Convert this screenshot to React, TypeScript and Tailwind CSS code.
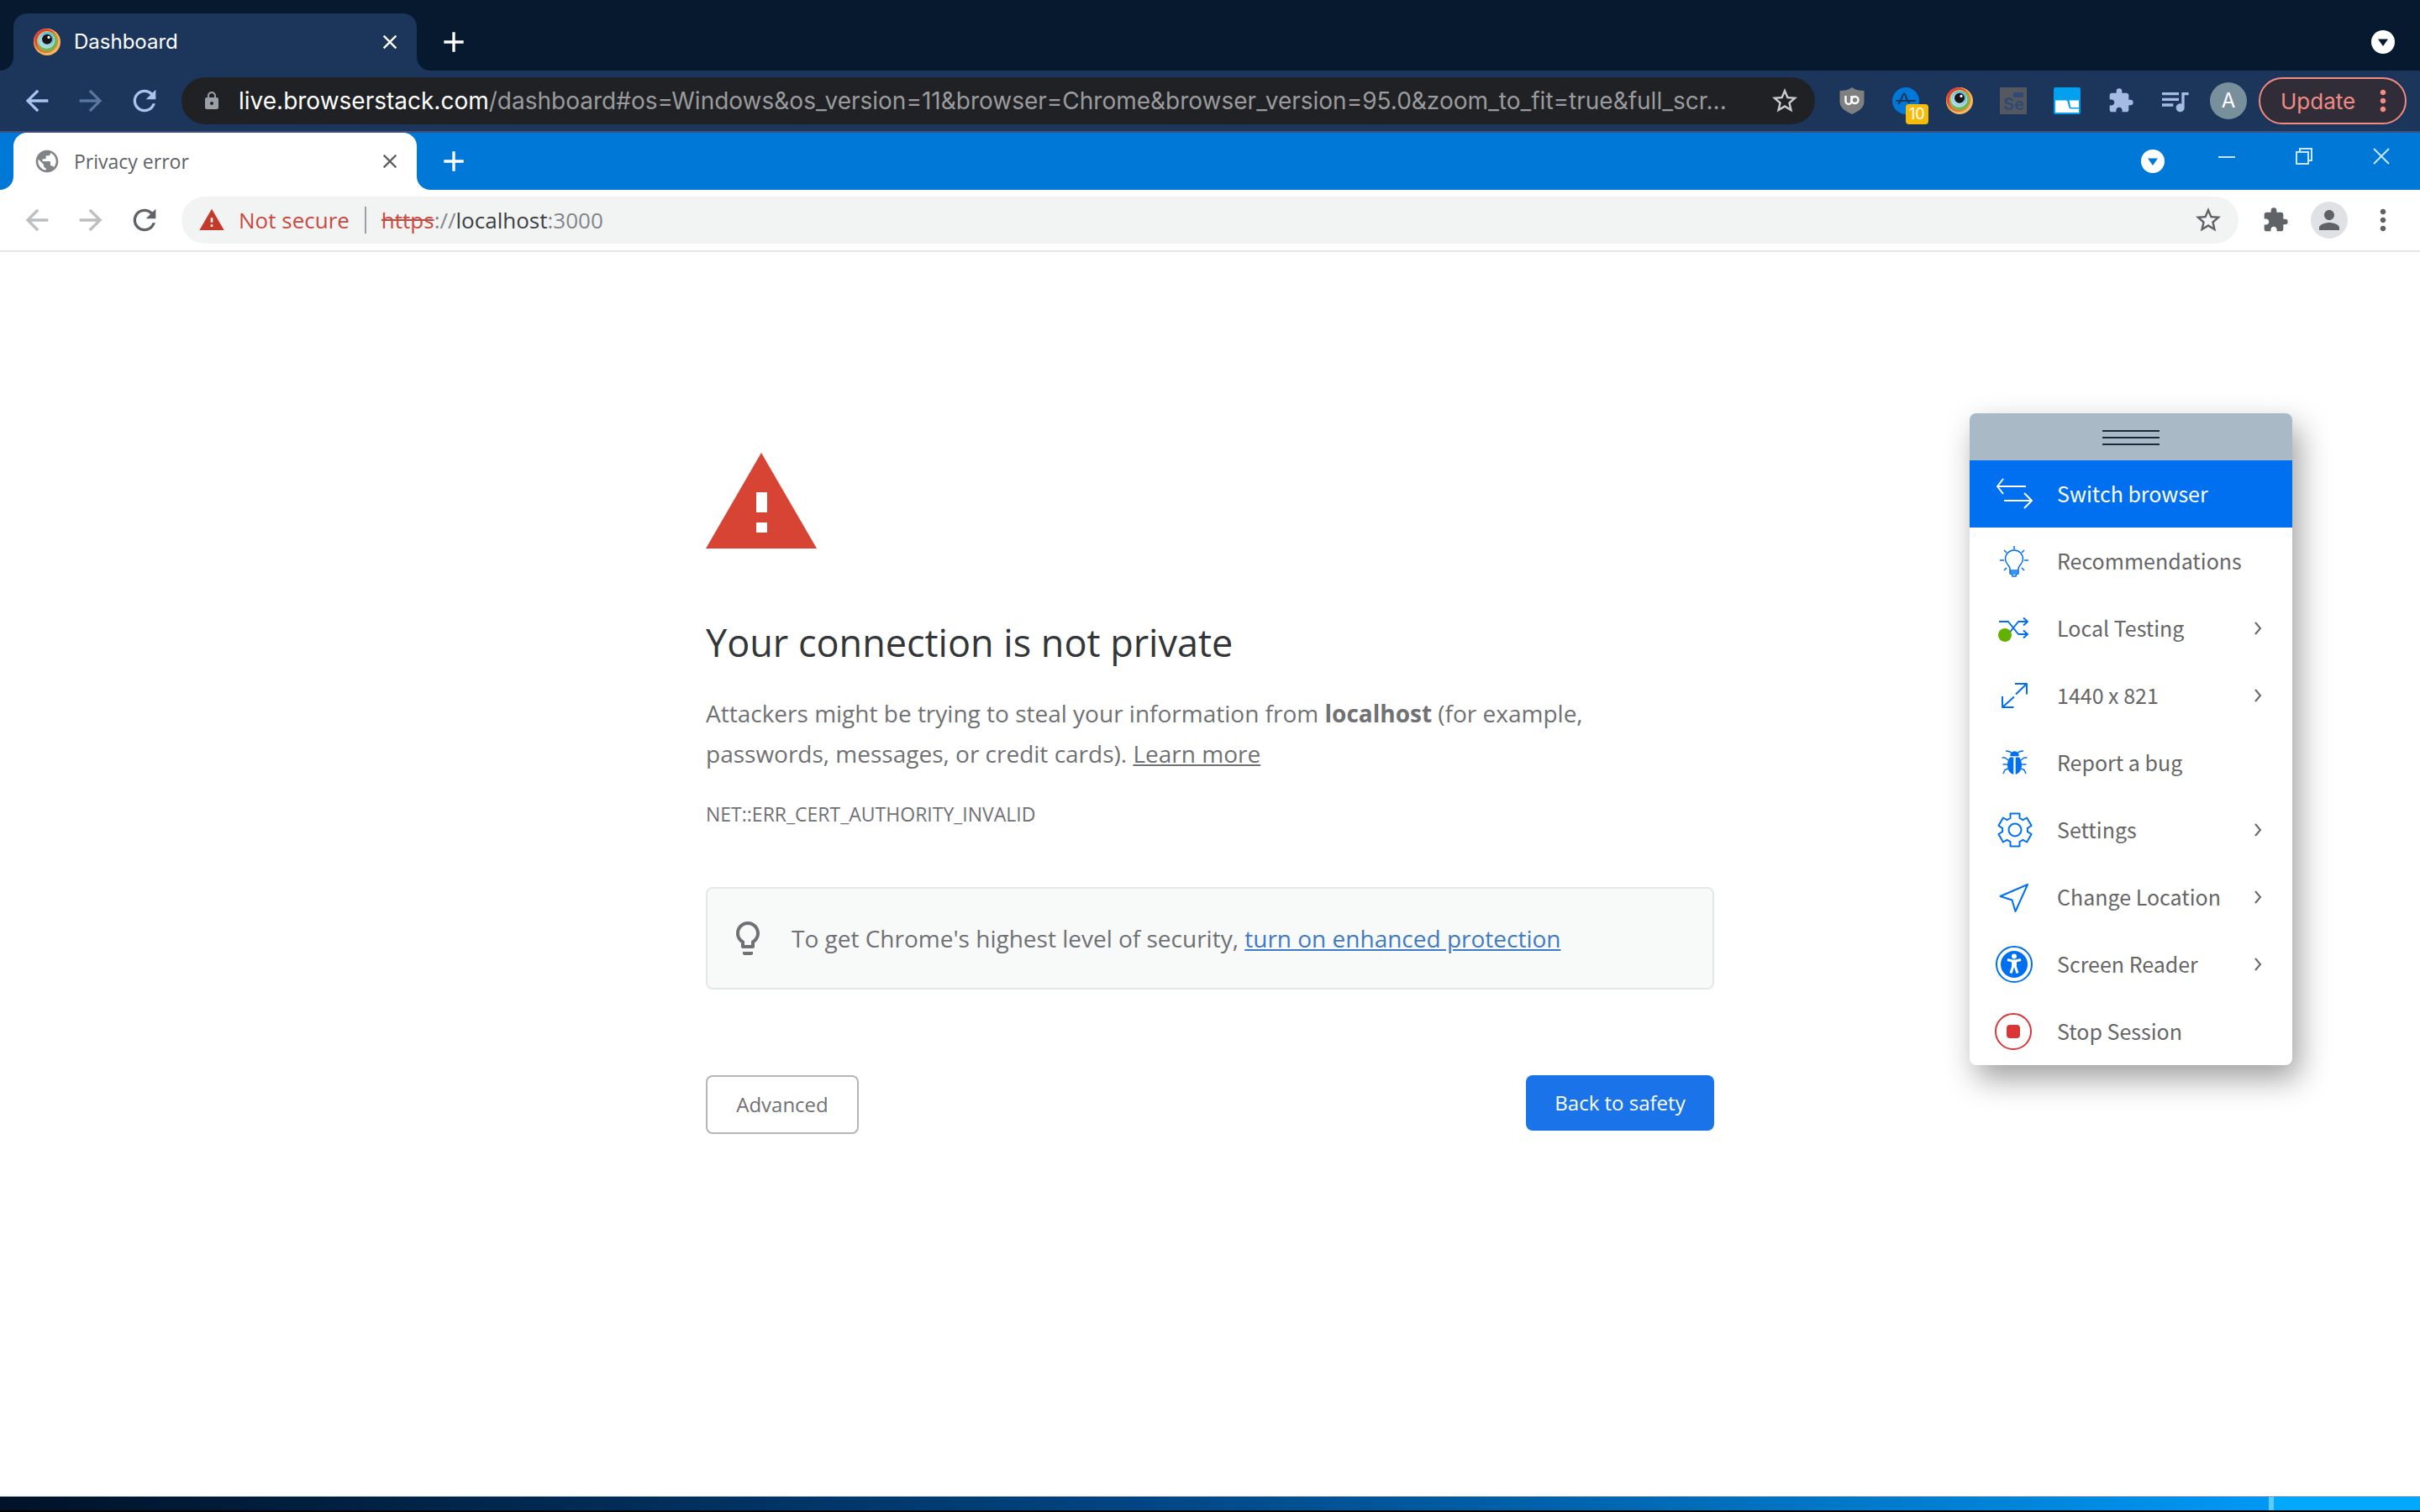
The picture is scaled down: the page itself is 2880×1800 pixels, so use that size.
import type { ReactNode } from "react";
import {
  MdAdd,
  MdArrowBack,
  MdArrowForward,
  MdClose,
  MdExtension,
  MdLightbulbOutline,
  MdLock,
  MdMoreVert,
  MdPerson,
  MdPublic,
  MdQueueMusic,
  MdRefresh,
  MdStarBorder,
  MdWarning,
} from "react-icons/md";

interface IconButtonProps {
  label: string;
  className?: string;
  children: ReactNode;
}

function IconButton({ label, className = "", children }: IconButtonProps) {
  return (
    <button
      type="button"
      aria-label={label}
      className={`flex size-10 shrink-0 items-center justify-center ${className}`}
    >
      {children}
    </button>
  );
}

function BrowserStackLogo() {
  return (
    <svg viewBox="0 0 32 32" className="size-8 shrink-0" aria-hidden="true">
      <circle cx="16" cy="16" r="16" fill="#f4b960" />
      <circle cx="14.6" cy="14.6" r="14.4" fill="#e66f32" />
      <circle cx="14" cy="13.2" r="12.6" fill="#e43c41" />
      <circle cx="16" cy="15" r="12" fill="#bdd041" />
      <circle cx="16.4" cy="15.4" r="11.4" fill="#6db54c" />
      <circle cx="15.4" cy="14" r="10" fill="#aedadb" />
      <circle cx="15.6" cy="13" r="8.4" fill="#56b8de" />
      <circle cx="14.8" cy="14" r="7.6" fill="#a5d9ea" />
      <circle cx="16" cy="12.8" r="6" fill="#191315" />
      <circle cx="18" cy="10.4" r="1.6" fill="#fff" />
    </svg>
  );
}

// The two rounded corners that join a tab to its toolbar
function TabFeet({ className }: { className: string }) {
  return (
    <>
      <svg viewBox="0 0 16 16" className={`absolute right-full bottom-0 size-4 ${className}`} aria-hidden="true">
        <path d="M16 0V16H0A16 16 0 0 0 16 0Z" fill="currentColor" />
      </svg>
      <svg viewBox="0 0 16 16" className={`absolute bottom-0 left-full size-4 ${className}`} aria-hidden="true">
        <path d="M0 0V16H16A16 16 0 0 1 0 0Z" fill="currentColor" />
      </svg>
    </>
  );
}

function TabSearch({ className }: { className: string }) {
  return (
    <button type="button" aria-label="Search tabs" className="shrink-0">
      <svg viewBox="0 0 28 28" className={`size-7 ${className}`}>
        <circle cx="14" cy="14" r="14" fill="#fff" />
        <path d="M8 10.500H20L14 19Z" fill="currentColor" />
      </svg>
    </button>
  );
}

function HostBrowser() {
  return (
    <header className="font-[Inter,sans-serif]">
      <div className="flex h-21 items-end bg-[#06192f] pr-[30px] pl-4">
        <div className="relative flex h-[68px] w-[480px] items-center rounded-t-2xl bg-[#1c355b] pr-4 pl-6 text-white">
          <TabFeet className="text-[#1c355b]" />
          <BrowserStackLogo />
          <span className="ml-4 flex-1 text-2xl">Dashboard</span>
          <button type="button" aria-label="Close tab" className="flex size-8 items-center justify-center">
            <MdClose className="size-7" />
          </button>
        </div>
        <div className="flex h-[68px] flex-1 items-center justify-between pl-6 text-white">
          <IconButton label="New tab">
            <MdAdd className="size-11" />
          </IconButton>
          <TabSearch className="text-[#06192f]" />
        </div>
      </div>

      <div className="flex h-[74px] items-center gap-6 border-b-2 border-[#40507c] bg-[#1c355b] px-4 pl-6">
        <IconButton label="Back" className="text-[#a9c3ef]">
          <MdArrowBack className="size-10" />
        </IconButton>
        <IconButton label="Forward" className="text-[#5a759f]">
          <MdArrowForward className="size-10" />
        </IconButton>
        <IconButton label="Reload" className="text-[#a9c3ef]">
          <MdRefresh className="size-10" />
        </IconButton>
        <div className="flex h-14 min-w-0 flex-1 items-center rounded-full bg-[#202124] pr-4 pl-5 text-[28px]">
          <MdLock className="size-8 shrink-0 p-1 text-[#9aa0a6]" />
          <label htmlFor="host-url" className="ml-4 text-white">
            live.browserstack.com
          </label>
          <input
            id="host-url"
            className="min-w-0 flex-1 bg-transparent text-[#9a9b9d] outline-none"
            defaultValue="/dashboard#os=Windows&os_version=11&browser=Chrome&browser_version=95.0&zoom_to_fit=true&full_scr..."
          />
          <IconButton label="Bookmark this page" className="text-[#c8cace]">
            <MdStarBorder className="size-9" />
          </IconButton>
        </div>
        <IconButton label="uBlock Origin">
          <svg viewBox="0 0 32 32" className="size-8">
            <path d="M16 0c4 3 9 4 14.500 4v13c0 8-8 12-14.500 15C9.500 29 1.500 25 1.500 17V4C7 4 12 3 16 0Z" fill="#808080" />
            <g fill="none" stroke="#fff" strokeWidth="2.400">
              <path d="M8.500 10v6.500a3.500 3.500 0 0 0 7 0V10" />
              <circle cx="19.500" cy="15" r="4" />
            </g>
          </svg>
        </IconButton>
        <IconButton label="Accessibility scanner" className="relative">
          <svg viewBox="0 0 32 32" className="size-8">
            <circle cx="16" cy="16" r="16" fill="#0078d7" />
            <path d="M4 16H28M7 20c3-2 5-12 7-12.500c3 0 2 11 7 10.500" fill="none" stroke="#1c355b" strokeWidth="2.200" />
          </svg>
          <span className="absolute top-6 left-5 rounded bg-[#f5bc0c] px-1 text-lg leading-6 text-white">
            10
          </span>
        </IconButton>
        <IconButton label="BrowserStack">
          <BrowserStackLogo />
        </IconButton>
        <IconButton label="Selenium IDE">
          <span className="relative flex size-8 items-end bg-[#55595f] pl-1 text-xl leading-6 font-bold text-[#2f4a73]">
            Se
            <span className="absolute top-1.5 right-1 h-1.5 w-3 bg-[#2f4a73]" />
          </span>
        </IconButton>
        <IconButton label="Window resizer">
          <svg viewBox="0 0 32 32" className="size-8">
            <rect width="32" height="32" rx="2" fill="#03a0f0" />
            <path d="M2 15.500H15C18 16 17 25.500 20 25.500H30V30H2Z" fill="#fff" />
            <path d="M18 15.500H30V24H21C19 23 20 17 18 15.500Z" fill="#fff" />
          </svg>
        </IconButton>
        <IconButton label="Extensions" className="text-[#a6bbe3]">
          <MdExtension className="size-8" />
        </IconButton>
        <IconButton label="Media controls" className="text-[#a6bbe3]">
          <MdQueueMusic className="size-10" />
        </IconButton>
        <IconButton label="Profile">
          <span className="flex size-11 shrink-0 items-center justify-center rounded-full bg-[#78909c] text-2xl text-white">
            A
          </span>
        </IconButton>
        <button
          type="button"
          className="-ml-2 flex h-14 w-44 shrink-0 items-center justify-between rounded-full border-2 border-[#f28b82] bg-[#302c38] pr-1.5 pl-6 text-[26px] text-[#f28b82]"
        >
          Update
          <MdMoreVert className="size-10" />
        </button>
      </div>
    </header>
  );
}

function RemoteBrowser() {
  return (
    <header className="font-['Open_Sans',sans-serif]">
      <div className="flex h-[68px] bg-[#0078d7] pl-4">
        <div className="relative flex h-full w-[480px] items-center rounded-t-2xl bg-white pr-4 pl-6 text-[#5f6368]">
          <TabFeet className="text-white" />
          <MdPublic className="size-8 text-[#808488]" />
          <span className="ml-4 flex-1 text-[23px]">Privacy error</span>
          <button type="button" aria-label="Close tab" className="flex size-8 items-center justify-center">
            <MdClose className="size-7" />
          </button>
        </div>
        <div className="flex flex-1 items-center justify-between pl-6 text-white">
          <IconButton label="New tab">
            <MdAdd className="size-11" />
          </IconButton>
          <TabSearch className="text-[#0078d7]" />
        </div>
        <div className="ml-7 flex h-14 text-[#c8e6fb]">
          <button type="button" aria-label="Minimize" className="flex w-[92px] items-center justify-center">
            <svg viewBox="0 0 20 20" className="size-5">
              <path d="M0 11H20" stroke="currentColor" strokeWidth="2" />
            </svg>
          </button>
          <button type="button" aria-label="Restore" className="flex w-[92px] items-center justify-center">
            <svg viewBox="0 0 20 20" className="size-5" fill="none" stroke="currentColor" strokeWidth="2">
              <path d="M1 5H15V19H1ZM5 5V1H19V15H15" />
            </svg>
          </button>
          <button type="button" aria-label="Close" className="flex w-[92px] items-center justify-center">
            <svg viewBox="0 0 20 20" className="size-5" fill="none" stroke="currentColor" strokeWidth="2">
              <path d="M1 1L19 19M19 1L1 19" />
            </svg>
          </button>
        </div>
      </div>

      <div className="flex h-[74px] items-center gap-6 border-b-2 border-[#e4e5e6] px-6 text-[#5f6368]">
        <IconButton label="Back" className="text-[#bcbec0]">
          <MdArrowBack className="size-10" />
        </IconButton>
        <IconButton label="Forward" className="text-[#bcbec0]">
          <MdArrowForward className="size-10" />
        </IconButton>
        <IconButton label="Reload">
          <MdRefresh className="size-10" />
        </IconButton>
        <div className="flex h-14 min-w-0 flex-1 items-center rounded-full bg-[#f2f4f4] pr-4 pl-5 text-[26px]">
          <MdWarning className="size-8 shrink-0 text-[#c5392b]" />
          <span className="ml-4 text-[#c94a3f]">Not secure</span>
          <span className="mx-[18px] h-8 w-0.5 bg-[#9aa0a6]" />
          <label htmlFor="remote-url" className="text-[#3c4043]">
            <span className="text-[#c94a3f] line-through">https</span>
            <span className="text-[#80868b]">://</span>localhost
          </label>
          <input
            id="remote-url"
            className="min-w-0 flex-1 bg-transparent text-[#80868b] outline-none"
            defaultValue=":3000"
          />
          <IconButton label="Bookmark this tab">
            <MdStarBorder className="size-9" />
          </IconButton>
        </div>
        <IconButton label="Extensions">
          <MdExtension className="size-8" />
        </IconButton>
        <IconButton label="Profile">
          <span className="flex size-11 shrink-0 items-center justify-center rounded-full bg-[#dfe1e5]">
            <MdPerson className="size-9" />
          </span>
        </IconButton>
        <IconButton label="Menu">
          <MdMoreVert className="size-10" />
        </IconButton>
      </div>
    </header>
  );
}

function PrivacyError() {
  return (
    <section className="mx-auto w-full max-w-[1200px] pt-[239px] font-['Open_Sans',sans-serif] text-[28px] leading-12 text-[#6f7174]">
      <svg viewBox="0 0 132 114" className="h-[114px] w-[132px]" aria-hidden="true">
        <path d="M66 0L132 114H0Z" fill="#d74434" />
        <path d="M60 47H73V71H60ZM60 83H73V95H60Z" fill="#fff" />
      </svg>
      <h1 className="mt-[82px] text-[45px] leading-[60px] text-[#333639]">Your connection is not private</h1>
      <p className="mt-[30px] max-w-[1100px]">
        Attackers might be trying to steal your information from <strong className="font-bold">localhost</strong> (for
        example, passwords, messages, or credit cards).{" "}
        <a href="#learn-more" className="underline">
          Learn more
        </a>
      </p>
      <p className="mt-6 text-[23px]">NET::ERR_CERT_AUTHORITY_INVALID</p>

      <div className="mt-[63px] flex h-[122px] items-center rounded-lg border-2 border-[#e6e8e8] bg-[#f8faf9] pl-6">
        <MdLightbulbOutline className="size-12" />
        <p className="ml-7">
          To get Chrome's highest level of security,{" "}
          <a href="#enhanced-protection" className="text-[#3f7bc4] underline">
            turn on enhanced protection
          </a>
        </p>
      </div>

      <div className="mt-[102px] flex items-start justify-between text-2xl">
        <button type="button" className="h-[70px] w-[182px] rounded-lg border-2 border-[#b4b6b9]">
          Advanced
        </button>
        <button type="button" className="h-[66px] w-56 rounded-lg bg-[#1a73e8] text-white">
          Back to safety
        </button>
      </div>
    </section>
  );
}

const toothCorners = [
  [-5.5, -14],
  [-5.5, -19.5],
  [5.5, -19.5],
  [5.5, -14],
];

const gearPoints = [0, 60, 120, 180, 240, 300]
  .flatMap((deg) => {
    const a = (deg * Math.PI) / 180;
    return toothCorners.map(
      ([x, y]) =>
        `${(22 + x * Math.cos(a) - y * Math.sin(a)).toFixed(1)},${(22 + x * Math.sin(a) + y * Math.cos(a)).toFixed(1)}`
    );
  })
  .join(" ");

interface MenuItem {
  label: string;
  icon: ReactNode;
  active?: boolean;
  submenu?: boolean;
}

const menuItems: MenuItem[] = [
  {
    label: "Switch browser",
    active: true,
    icon: <path d="M35 13H1M8 4L1 13L8 22M9 30H42M33 21L42 30L33 39" stroke="#fff" />,
  },
  {
    label: "Recommendations",
    icon: (
      <g strokeWidth="1.500">
        <path d="M16 33v-2c0-4-5.500-5.500-5.500-11.500a10.500 10.500 0 0 1 21 0c0 6-5.500 7.500-5.500 11.500v2ZM16 33v4H26V33M18 37L19 40H23L24 37M16 35H26" />
        <path d="M21 4V8M4 21H9M33 21H38M9 9L12 12M33 9L30 12M9 33L12 30M33 33L30 30" />
      </g>
    ),
  },
  {
    label: "Local Testing",
    submenu: true,
    icon: (
      <>
        <path d="M3 14H14L26 29H36M14 29L26 14H36M32 9.500L37 14L32 18.500M32 24.500L37 29L32 33.500" />
        <circle cx="10" cy="30" r="8" fill="#64b000" stroke="none" />
      </>
    ),
  },
  {
    label: "1440 x 821",
    submenu: true,
    icon: <path d="M23 20.500L36 8M22 8H36V20.500M21 23.500L7 36M7 23V36H20.500" />,
  },
  {
    label: "Report a bug",
    icon: (
      <g strokeWidth="1.500">
        <path d="M17 13.500a4.500 4.500 0 0 1 9 0Z" fill="#0070f0" />
        <path d="M20.300 15.500V36C15 34 13 30 13 24.500C13 20 14.500 17 16 15.500ZM22.700 15.500V36C28 34 30 30 30 24.500C30 20 28.500 17 27 15.500Z" fill="#0070f0" stroke="none" />
        <path d="M18 11C17 9 14 8 11 8M25 11C26 9 29 8 32 8M14 19L10 16H6.500M29 19L33 16H36.500M13 24H7.500M30 24H35.500M14 29L10 30.500L8 35M29 29L33 30.500L35 35" />
      </g>
    ),
  },
  {
    label: "Settings",
    submenu: true,
    icon: (
      <>
        <polygon points={gearPoints} />
        <circle cx="22" cy="22" r="7.500" />
      </>
    ),
  },
  {
    label: "Change Location",
    submenu: true,
    icon: <path d="M37 7L4.500 21L18.500 25.500L22.500 39Z" />,
  },
  {
    label: "Screen Reader",
    submenu: true,
    icon: (
      <>
        <circle cx="21" cy="22" r="21" />
        <circle cx="21" cy="22" r="16" fill="#0070f0" stroke="none" />
        <circle cx="21" cy="12.500" r="3" fill="#fff" stroke="none" />
        <path d="M13 16.500L19 18H23L29 16.500M19.500 18V25L17 32.500M22.500 18V25L25 32.500M21 18V24" stroke="#fff" strokeWidth="3" />
      </>
    ),
  },
  {
    label: "Stop Session",
    icon: (
      <>
        <circle cx="20" cy="22" r="21" stroke="#d93638" />
        <rect x="12" y="14" width="16" height="16" rx="4" fill="#d93638" stroke="none" />
      </>
    ),
  },
];

function SessionToolbar() {
  return (
    <aside className="absolute top-[192px] right-[152px] w-96 overflow-hidden rounded-lg bg-white font-['Source_Sans_Pro','Noto_Sans_CJK_SC',sans-serif] text-[25px] shadow-[8px_16px_36px_rgba(0,0,0,0.38)]">
      <div className="flex h-14 flex-col items-center justify-center gap-1.5 bg-[#a9bac6] pt-0.5">
        <span className="h-0.5 w-[68px] bg-[#1b2a38]" />
        <span className="h-0.5 w-[68px] bg-[#1b2a38]" />
        <span className="h-0.5 w-[68px] bg-[#1b2a38]" />
      </div>
      <ul>
        {menuItems.map((item) => (
          <li key={item.label}>
            <button
              type="button"
              className={`flex h-20 w-full items-center pr-9 pl-8 text-left ${
                item.active ? "bg-[#0070f0] text-white" : "text-[#666]"
              }`}
            >
              <svg
                viewBox="0 0 44 44"
                className="size-11 shrink-0 overflow-visible"
                fill="none"
                stroke="#0070f0"
                strokeWidth="2"
                strokeLinejoin="round"
                aria-hidden="true"
              >
                {item.icon}
              </svg>
              <span className="ml-7 flex-1">{item.label}</span>
              {item.submenu && (
                <svg viewBox="0 0 10 16" className="h-4 w-2.5" fill="none" stroke="currentColor" strokeWidth="2" aria-hidden="true">
                  <path d="M2 1L8 8L2 15" />
                </svg>
              )}
            </button>
          </li>
        ))}
      </ul>
    </aside>
  );
}

function App() {
  return (
    <div className="flex min-h-screen flex-col bg-white">
      <HostBrowser />
      <RemoteBrowser />
      <main className="relative flex-1">
        <PrivacyError />
        <SessionToolbar />
      </main>
      <footer className="flex h-[19px] border-t border-b-2 border-t-[#8fa3b8] border-b-black">
        <div className="flex-1 bg-linear-to-r from-[#001228] via-[#004583] to-[#0098f5]" />
        <div className="w-1.5 bg-[#5ecbff]" />
        <div className="w-[174px] bg-[#00a8ff]" />
      </footer>
    </div>
  );
}

export default App;
